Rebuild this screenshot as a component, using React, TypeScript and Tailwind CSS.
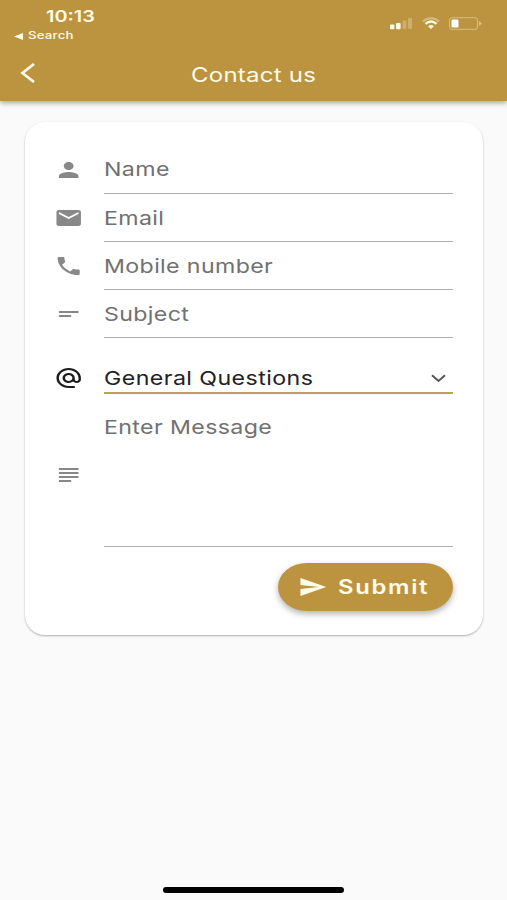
import { useState } from 'react';
import { MdAlternateEmail, MdEmail, MdPerson, MdPhone, MdSend, MdShortText, MdSubject } from 'react-icons/md';

const StatusIcons = () => (
  <svg className="mt-[15px] h-[16px] w-[94px]" viewBox="0 0 94 16" fill="none">
    <g fill="#fffbe9">
      <rect x="1" y="9.5" width="4.4" height="4.8" rx="1" />
      <rect x="7" y="8" width="4.6" height="6.3" rx="1" />
      <rect x="13.5" y="5.5" width="4" height="8.5" rx="1" opacity=".25" />
      <rect x="19" y="3" width="4" height="11" rx="1" opacity=".25" />
    </g>
    <path d="M34 6.4C38.5 2.2 45.5 2.2 50 6.4" stroke="#fffbe9" strokeWidth="2" opacity=".4" />
    <path d="M36.5 8.9C40 5.8 44 5.8 47.5 8.9" stroke="#fffbe9" strokeWidth="2.4" />
    <path d="M39 11.3C41 9.6 43 9.6 45 11.3L42 14Z" fill="#fffbe9" />
    <rect x="60.5" y="2.7" width="28" height="11.6" rx="2.5" stroke="#fffbe9" opacity=".4" />
    <rect x="62.5" y="4.5" width="7" height="8" rx="1.2" fill="#fff" />
    <path d="M90 5.8L93 8.5L90 11.2Z" fill="#fffbe9" opacity=".4" />
  </svg>
);

const iconClass = 'h-6 w-[29.4px] shrink-0';
const inputClass =
  'block w-[286px] origin-left scale-x-[1.22] bg-transparent text-[19px] tracking-[0.3px] text-[#222] outline-none placeholder:text-[#717171]';

const fields = [
  { name: 'name', label: 'Name', type: 'text', icon: MdPerson },
  { name: 'email', label: 'Email', type: 'email', icon: MdEmail },
  { name: 'phone', label: 'Mobile number', type: 'tel', icon: MdPhone },
  { name: 'subject', label: 'Subject', type: 'text', icon: MdShortText },
];

const App = () => {
  const [formData, setFormData] = useState<Record<string, string>>({});

  const handleChange = (e: React.ChangeEvent<HTMLInputElement | HTMLTextAreaElement>) => {
    const { name, value } = e.target;
    setFormData(prev => ({ ...prev, [name]: value }));
  };

  const handleSubmit = (e: React.FormEvent) => {
    e.preventDefault();
  };

  return (
    <div className="flex h-[900px] w-[507px] flex-col overflow-hidden bg-[#fafafa] font-['Inter',sans-serif]">
      <header className="h-[101px] shrink-0 bg-[#bc9440] text-[#fffbe9] shadow-[0_2px_5px_rgba(0,0,0,0.35)]">
        <div className="flex h-[48px] justify-between pr-[24px]">
          <div className="pt-[8px] pl-[14px]">
            <div className="ml-[32px] w-fit origin-left scale-x-[1.24] text-[16px] leading-[17px] font-semibold">10:13</div>
            <div className="flex items-center pt-[4px]">
              <svg className="mr-[5px] h-[7px] w-[9px]" viewBox="0 0 9 7" fill="currentColor">
                <path d="M0 3.5L9 0V7Z" />
              </svg>
              <span className="origin-left scale-x-[1.22] text-[10.8px] leading-[14px] font-medium tracking-[0.2px]">Search</span>
            </div>
          </div>
          <StatusIcons />
        </div>
        <div className="flex h-[53px] items-center pl-[20px]">
          <button type="button" aria-label="Back" className="mb-[4px]">
            <svg className="h-[20px] w-[16px]" viewBox="0 0 16 20" fill="none" stroke="currentColor" strokeWidth="2.7">
              <path d="M14 1L2.5 10L14 19" />
            </svg>
          </button>
          <h1 className="mt-[3px] ml-[155px] origin-left scale-x-[1.23] text-[19.5px] tracking-[0.2px]">Contact us</h1>
        </div>
      </header>

      <form
        onSubmit={handleSubmit}
        className="mt-[21px] ml-[25px] flex h-[513px] w-[458px] flex-col rounded-[20px] bg-white pt-[23.5px] pr-[30px] pl-[29.4px] shadow-[0_1px_2px_rgba(0,0,0,0.3)]"
      >
        {fields.map(({ name, label, type, icon: Icon }) => (
          <div key={name} className="flex h-[48.2px] items-center justify-between">
            <Icon className={`${iconClass} text-[#888]`} preserveAspectRatio="none" />
            <div className="flex h-full w-[349px] items-center border-b border-[#b0b0b0] pt-[3px]">
              <input
                name={name}
                type={type}
                placeholder={label}
                value={formData[name] || ''}
                onChange={handleChange}
                className={inputClass}
              />
            </div>
          </div>
        ))}

        <div className="mt-[16px] flex h-[48px] items-center justify-between">
          <MdAlternateEmail className={`${iconClass} text-[#1c1c1c]`} preserveAspectRatio="none" />
          <button type="button" className="mt-[-0.5px] flex h-[32px] w-[349px] items-center justify-between border-b-2 border-[#bda25c] pt-[2px] pr-[7px]">
            <span className="mt-[2px] origin-left scale-x-[1.22] text-[19px] tracking-[0.35px] text-[#222]">General Questions</span>
            <svg className="h-[9px] w-[15px]" viewBox="0 0 15 9" fill="none" stroke="#555" strokeWidth="2">
              <path d="M1 1.2L7.5 7L14 1.2" />
            </svg>
          </button>
        </div>

        <div className="flex h-[144.5px] items-center justify-between">
          <MdSubject className={`${iconClass} text-[#888]`} preserveAspectRatio="none" />
          <div className="h-full w-[349px] border-b border-[#b0b0b0] pt-[13px]">
            <textarea
              name="message"
              placeholder="Enter Message"
              value={formData.message || ''}
              onChange={handleChange}
              className={`${inputClass} h-[120px] resize-none leading-[26px]`}
            />
          </div>
        </div>

        <button
          type="submit"
          className="mt-[16px] flex h-[48px] w-[175px] shrink-0 items-center self-end rounded-[29px/24px] bg-[#bc9440] pl-[20px] text-[#fffbe9] shadow-[0_3px_6px_rgba(0,0,0,0.3)]"
        >
          <MdSend className={iconClass} preserveAspectRatio="none" />
          <span className="mt-[2px] ml-[11px] origin-left scale-x-[1.22] text-[19.5px] font-semibold tracking-[1.4px]">Submit</span>
        </button>
      </form>

      <div className="mx-auto mt-auto mb-[7.5px] h-[5.5px] w-[181px] rounded-full bg-black" />
    </div>
  );
};

export default App;
